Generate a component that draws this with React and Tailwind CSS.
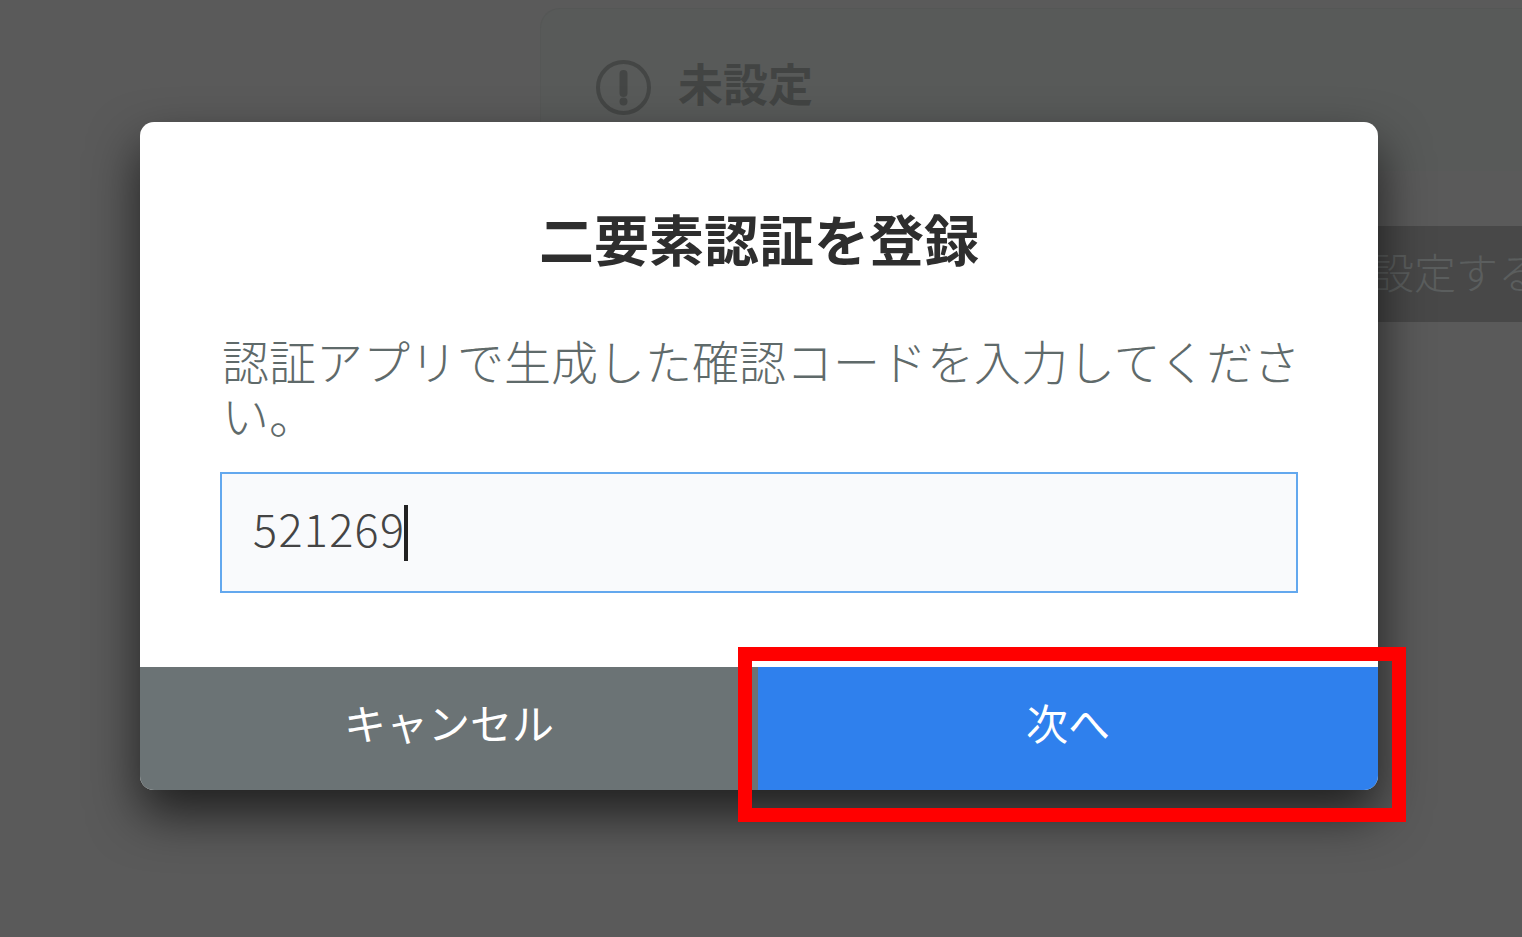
import React from "react";

const font = { fontFamily: '"Noto Sans CJK JP", "Noto Sans", sans-serif' };

function AlertIcon() {
  return (
    <svg width="56" height="56" viewBox="0 0 56 56" fill="none" className="shrink-0">
      <circle cx="27.5" cy="27.5" r="25.5" stroke="#444645" strokeWidth="4" />
      <path d="M27.5 14v19" stroke="#444645" strokeWidth="8" strokeLinecap="round" />
      <circle cx="27.5" cy="41.5" r="4" fill="#444645" />
    </svg>
  );
}

function Background() {
  return (
    <div className="pl-[540px] pt-2">
      <div className="flex h-[163px] items-start gap-[26px] rounded-tl-[20px] border-t border-l border-[#555756] bg-[#585a59] pl-[55px] pt-[51px]">
        <AlertIcon />
        <span className="mt-[-5px] text-[45px] leading-[56px] font-bold text-[#424443]">未設定</span>
      </div>
      <div className="mt-[55px] ml-[710px] flex h-[96px] w-[412px] items-center justify-center bg-[#484848] pb-[8px] text-[42px] font-light text-[#5b5e5e]">
        設定する
      </div>
    </div>
  );
}

function Modal() {
  return (
    <div className="absolute top-[122px] left-[140px] flex h-[668px] w-[1238px] flex-col rounded-[14px] bg-white shadow-[0_24px_50px_rgba(0,0,0,0.65)]">
      <h2 className="mt-[83px] text-center text-[55px] leading-[64px] font-bold text-[#2e2e2e]">
        二要素認証を登録
      </h2>
      <p className="mt-[64px] mr-[76px] ml-[82px] text-[47px] leading-[54px] font-light text-[#5f6a6a]">
        認証アプリで生成した確認コードを入力してください。
      </p>
      <div className="mx-[80px] mt-[31px] flex h-[121px] items-center border-2 border-[#63a8ee] bg-[#f9fafc] pl-[31px] text-[45px] font-light text-[#444]">
        <span className="pb-[10px] tracking-[1.3px]">521269</span>
        <span className="ml-[-1px] h-[56px] w-[4px] bg-[#222]" />
      </div>
      <div className="mt-auto flex h-[123px] text-[42px] text-white">
        <button className="flex-1 rounded-bl-[14px] bg-[#6b7375] pb-[14px]">キャンセル</button>
        <div className="relative w-[620px]">
          <button className="h-full w-full rounded-br-[14px] bg-[#2f80ed] pb-[14px]">次へ</button>
          <div className="absolute top-[-20px] right-[-28px] bottom-[-32px] left-[-20px] border-[14px] border-[#ff0000]" />
        </div>
      </div>
    </div>
  );
}

export default function App() {
  return (
    <div className="relative h-[937px] w-full overflow-hidden bg-[#5a5a5a]" style={font}>
      <Background />
      <Modal />
    </div>
  );
}
